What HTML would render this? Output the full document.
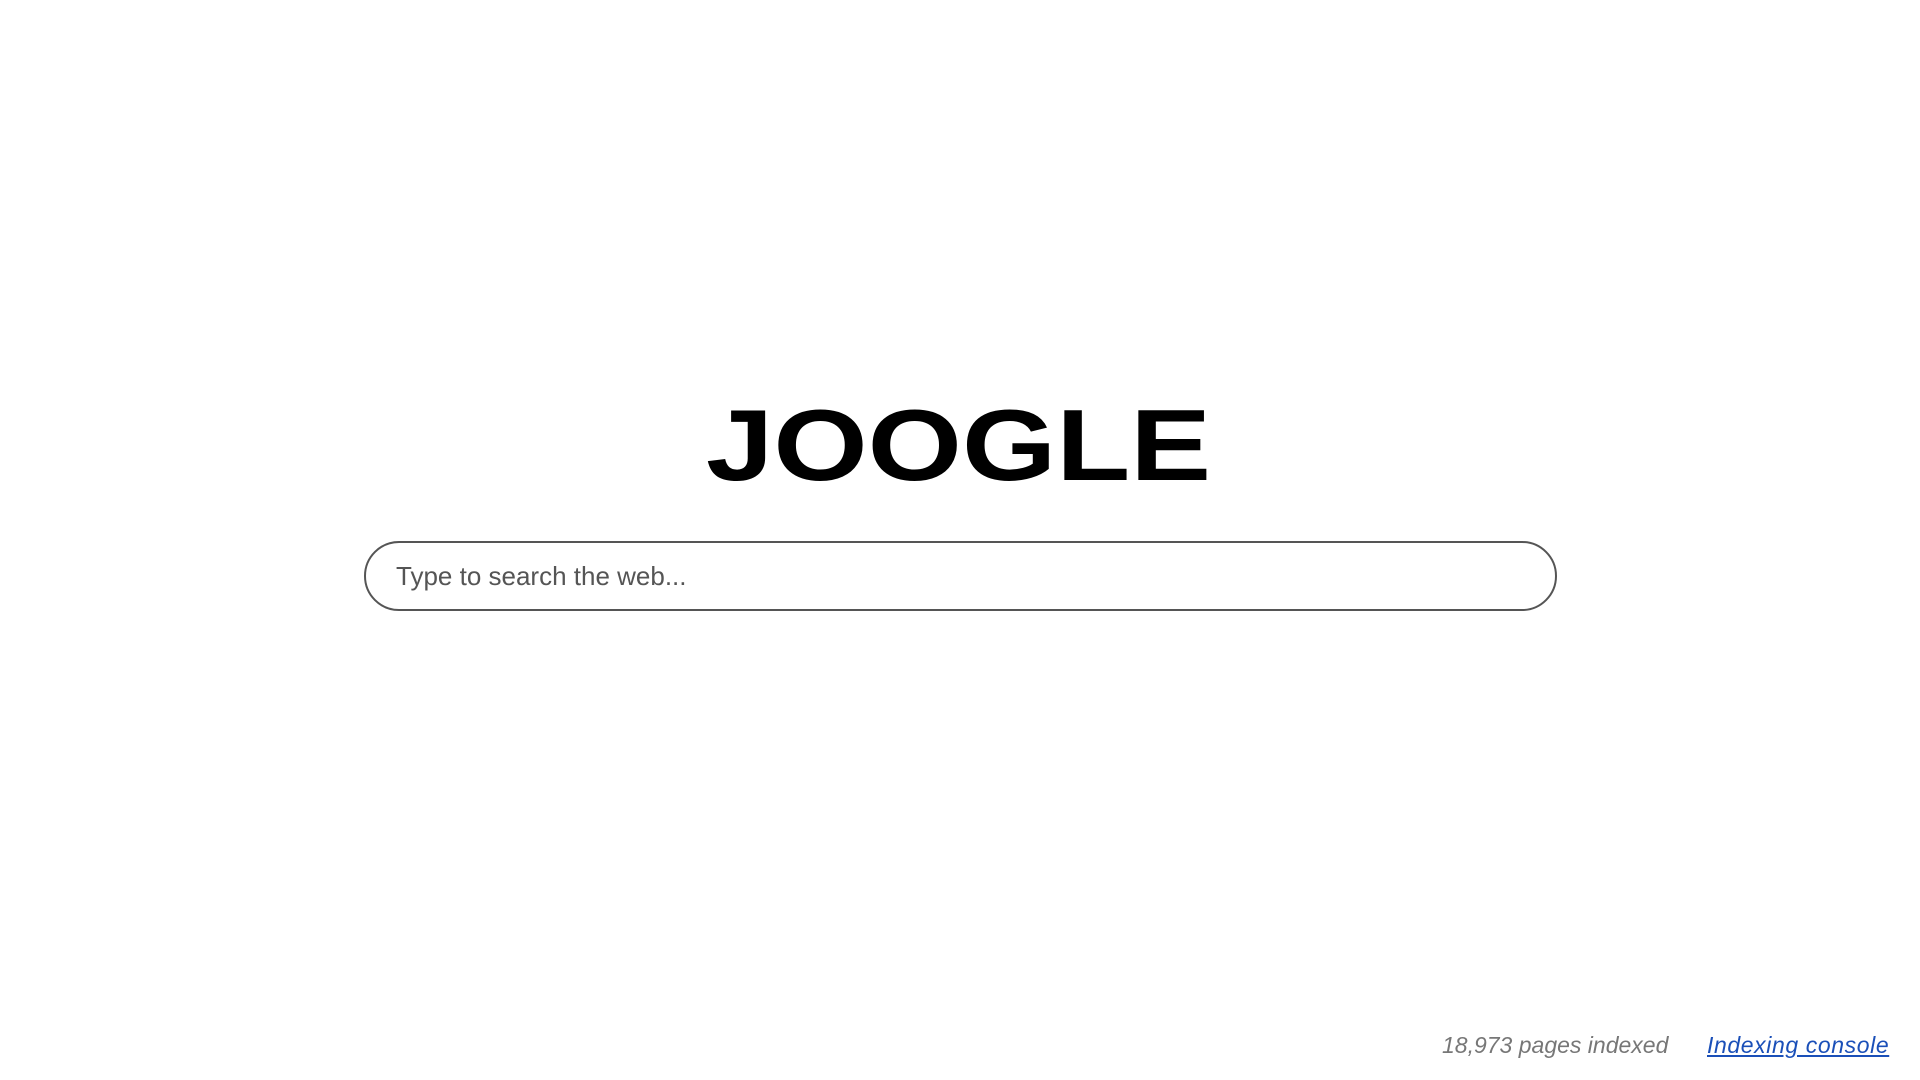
<!DOCTYPE html>
<html><head><meta charset="utf-8"><style>
html,body{margin:0;padding:0;background:#fff;width:1920px;height:1080px;overflow:hidden;font-family:"Liberation Sans",sans-serif;}
.logo{position:absolute;left:706px;top:396px;font-weight:bold;font-size:101px;letter-spacing:0px;color:#000;line-height:101px;white-space:nowrap;transform:scaleX(1.2);transform-origin:0 0;}
.box{position:absolute;left:364px;top:541px;width:1189px;height:66px;border:2px solid #555;border-radius:36px;}
.ph{position:absolute;left:30px;top:0;line-height:66px;font-size:26px;color:#555;}
.foot{position:absolute;top:1030px;font-size:23px;font-style:italic;line-height:30px;}
</style></head><body>
<div class="logo">JOOGLE</div>
<div class="box"><div class="ph">Type to search the web...</div></div>
<div class="foot" style="left:1442px;color:#777;">18,973 pages indexed</div>
<div class="foot" style="left:1707px;color:#1a4fb8;text-decoration:underline;letter-spacing:0.6px;">Indexing console</div>
</body></html>
